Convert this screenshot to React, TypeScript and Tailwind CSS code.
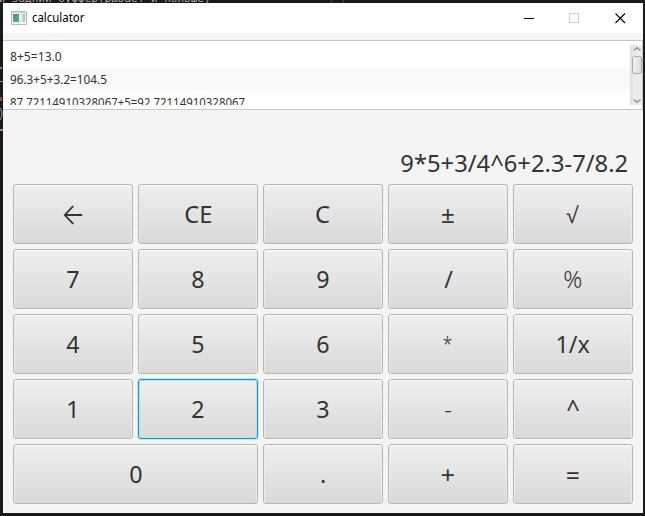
import React from "react";

type Key = { label: React.ReactNode; wide?: boolean; focus?: boolean; tone?: string };

const BackArrow = () => (
  <svg width="20" height="20" viewBox="0 0 20 20" fill="none" stroke="#333" strokeWidth="1.8" className="relative top-px">
    <path d="M19.200 10H2M10.200 1.200L1.800 10L10.200 18.800" />
  </svg>
);

const digit = "inline-block scale-x-[0.97]";

const keys: Key[] = [
  { label: <BackArrow />, tone: "block" },
  { label: "CE", tone: "inline-block scale-x-[0.99]" },
  { label: "C", tone: "inline-block scale-x-[0.99]" },
  { label: "±", tone: "inline-block scale-x-[1.03]" },
  { label: "√", tone: "inline-block text-[22px] scale-x-[0.96] -translate-x-px" },
  { label: "7" }, { label: "8" }, { label: "9" },
  { label: "/" },
  { label: "%", tone: "inline-block font-light scale-x-[0.98]" },
  { label: "4" }, { label: "5" }, { label: "6" },
  { label: "*", tone: "inline-block text-[20px] font-light scale-x-[0.9]" },
  { label: "1/x", tone: "inline-block scale-x-[0.97]" },
  { label: "1" }, { label: "2", focus: true }, { label: "3" },
  { label: "-", tone: "inline-block font-light" },
  { label: "^", tone: "inline-block -translate-y-px" },
  { label: "0", wide: true },
  { label: "." },
  { label: "+", tone: "inline-block scale-x-[1.06] translate-y-px" },
  { label: "=", tone: "inline-block scale-x-[1.03] translate-y-px" },
];

function CalcKey({ label, wide, focus, tone }: Key) {
  return (
    <button
      className={
        "flex h-[60px] items-center justify-center rounded-[3px] border bg-linear-to-b from-[#efefef] to-[#d9d9d9] text-[24px] leading-[32px] text-[#333] " +
        (wide ? "col-span-2 " : "") +
        (focus
          ? "border-[#039ed3] shadow-[0_0_0_1px_#c3e6f1,inset_0_0_0_1px_#c5dce3]"
          : "border-[#b5b5b5] shadow-[inset_0_1px_0_#fcfcfc,inset_1px_0_0_#ececec,inset_-1px_0_0_#ececec,0_1px_0_#f8f8f8]")
      }
    >
      <span className={tone ?? digit}>{label}</span>
    </button>
  );
}

function TitleBar() {
  return (
    <header className="flex h-[30px] shrink-0 items-center bg-white pl-2">
      <svg width="16" height="14" viewBox="0 0 16 14" className="-mt-px shrink-0">
        <defs>
          <linearGradient id="pane" x1="0" y1="0" x2="1" y2="1">
            <stop offset="0" stopColor="#5385ad" />
            <stop offset="1" stopColor="#55b47b" />
          </linearGradient>
        </defs>
        <path d="M.5 .5h15v13H.5z" fill="#f4f4f4" stroke="#b5b9bf" />
        <path d="M1 1h14v1.500H1z" fill="#d5d8de" />
        <path d="M2 3h6v8H2z" fill="url(#pane)" />
        <path d="M9 3h3v8H9z" fill="#e3e5e9" />
        <path d="M12 3h2v4h-2z" fill="#a3bccf" />
        <path d="M12 7h2v4h-2z" fill="#a9cdb7" />
      </svg>
      <h1 className="ml-[5px] w-[60px] origin-left scale-x-[0.95] text-[12px] leading-4 text-black">calculator</h1>
      <svg width="104" height="12" viewBox="0 0 104 12" className="mr-[16px] -mt-px ml-auto shrink-0" fill="none" shapeRendering="crispEdges">
        <path d="M1 6.500h10" stroke="#000" />
        <path d="M46.500 1.500h9v9h-9z" stroke="#ccc" />
        <path d="M92.500 1.500l9.500 9.500M102 1.500L92.500 11" stroke="#000" strokeWidth="1.100" shapeRendering="auto" />
      </svg>
    </header>
  );
}

const line = "inline-block origin-left scale-x-[0.953]";

function History() {
  return (
    <section className="mt-[7px] flex h-[70px] shrink-0 border-y border-r border-[#c8c8c8] bg-white py-1">
      <ul className="h-[60px] flex-1 overflow-hidden text-[12px] leading-[23px] text-[#333]">
        <li className="h-[23px] pl-[7px]"><span className="inline-block origin-left scale-x-[1.01]">8+5=13.0</span></li>
        <li className="h-[23px] bg-[#f9f9f9] pl-[7px]"><span className="inline-block origin-left scale-x-[0.98]">96.3+5+3.2=104.5</span></li>
        <li className="h-[23px] pl-[7px]"><span className={line}>87.72114910328067+5=92.72114910328067</span></li>
      </ul>
      <svg width="12" height="60" viewBox="0 0 12 60" fill="none">
        <defs>
          <linearGradient id="track"><stop stopColor="#dedede" /><stop offset=".35" stopColor="#eaeaea" /><stop offset="1" stopColor="#ededed" /></linearGradient>
          <linearGradient id="thumb"><stop stopColor="#f2f2f2" /><stop offset="1" stopColor="#dadada" /></linearGradient>
        </defs>
        <path d="M0 0h12v60H0z" fill="url(#track)" />
        <path d="M3.500 5.500L7 2.800l3.500 2.700M3.500 54.500L7 57.200l3.500-2.700" stroke="#949494" strokeWidth="1.500" />
        <rect x="2.500" y="11.500" width="9" height="17" rx="2" fill="url(#thumb)" stroke="#aaa" />
      </svg>
    </section>
  );
}

/* Slivers of the editor that stay visible behind the calculator window. */
function EditorBehind() {
  return (
    <>
      <div className="absolute top-[-8px] left-[-8px] font-['DejaVu_Sans_Mono',monospace] text-[11px] leading-[14px] whitespace-pre text-[#a9a9a9]">ий задний буффер(рывает и польше)</div>
      <div className="absolute top-0 left-[331px] h-[3px] w-px bg-[#444]" />
      <div className="absolute top-0 left-[343px] h-[3px] w-px bg-[#444]" />
      <div className="absolute top-[67px] left-0 h-[2px] w-[2px] bg-[#8080b8]" />
      <div className="absolute top-[81px] left-0 h-px w-[3px] bg-[#c0903a]" />
      <div className="absolute top-[97px] left-0 h-[4px] w-[2px] bg-[#a04848]" />
      <svg className="absolute top-[107px] left-0" width="3" height="14" fill="none"><path d="M0 1Q4 7 0 13" stroke="#8a9bb0" /></svg>
      <div className="absolute top-[129px] left-0 h-[2px] w-[3px] bg-[#b08050]" />
    </>
  );
}

export default function App() {
  return (
    <div className="relative h-[516px] w-[645px] overflow-hidden bg-[#1b1a1b] pt-[3px] pr-[2px] pb-[3px] pl-[3px] font-['Noto_Sans','Open_Sans',sans-serif]">
      <EditorBehind />
      <main className="relative flex h-[510px] w-[640px] flex-col bg-[#f4f4f4]">
        <TitleBar />
        <History />
        <output className="mt-[35px] block h-[39px] pr-[15px] text-right text-[24px] leading-[36px] whitespace-nowrap text-[#333]">
          <span className="inline-block origin-right scale-x-[0.99]">9*5+3/4^6+2.3-7/8.2</span>
        </output>
        <div className="grid grid-cols-5 gap-[5px] px-[10px]">
          {keys.map((key, i) => <CalcKey key={i} {...key} />)}
        </div>
      </main>
    </div>
  );
}
